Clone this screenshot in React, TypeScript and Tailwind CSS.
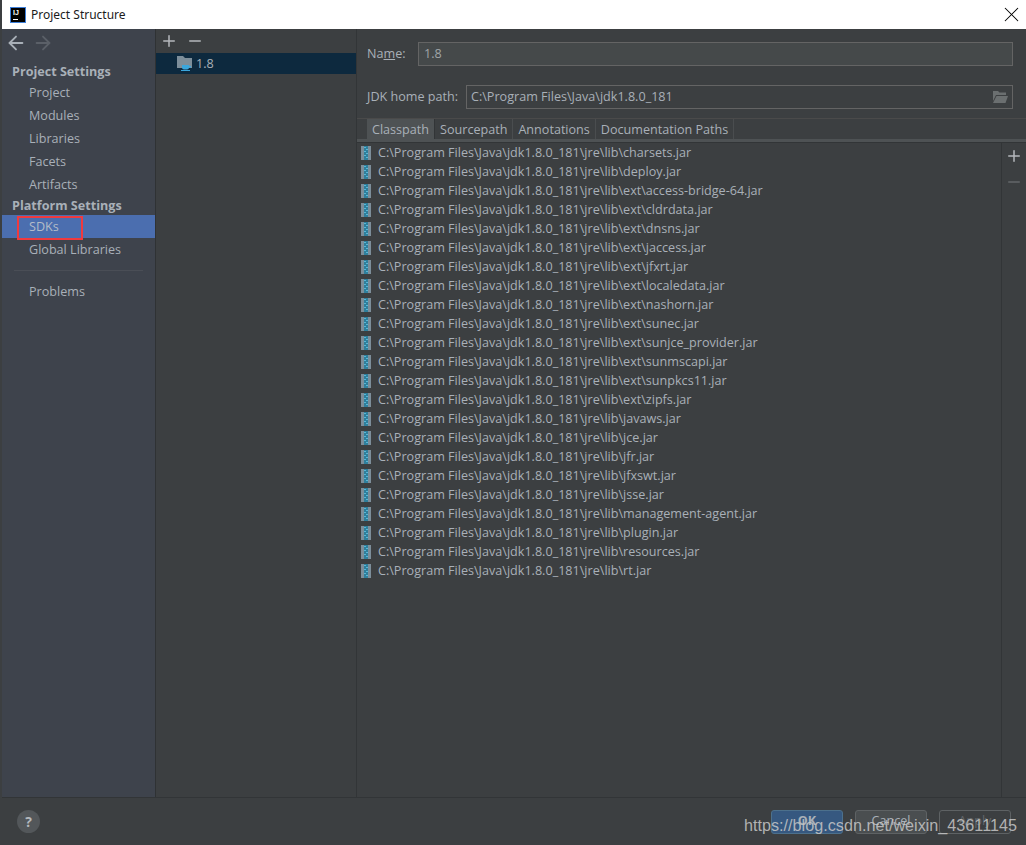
import { ArrowLeft, ArrowRight, Minus, Plus, X } from 'lucide-react';

const jars = [
  'charsets.jar',
  'deploy.jar',
  'ext\\access-bridge-64.jar',
  'ext\\cldrdata.jar',
  'ext\\dnsns.jar',
  'ext\\jaccess.jar',
  'ext\\jfxrt.jar',
  'ext\\localedata.jar',
  'ext\\nashorn.jar',
  'ext\\sunec.jar',
  'ext\\sunjce_provider.jar',
  'ext\\sunmscapi.jar',
  'ext\\sunpkcs11.jar',
  'ext\\zipfs.jar',
  'javaws.jar',
  'jce.jar',
  'jfr.jar',
  'jfxswt.jar',
  'jsse.jar',
  'management-agent.jar',
  'plugin.jar',
  'resources.jar',
  'rt.jar',
];

const tabs = ['Classpath', 'Sourcepath', 'Annotations', 'Documentation Paths'];

function SideItem({ label }: { label: string }) {
  return <div className="h-[23px] pl-[27px] leading-[23px] text-[#a9b0b8]">{label}</div>;
}

function JarIcon() {
  return (
    <svg width="10" height="14" viewBox="0 0 10 14" className="mb-[2px] shrink-0">
      <rect x="0" y="0" width="3" height="14" fill="#7d8e9a" />
      <rect x="7" y="0" width="3" height="14" fill="#7d8e9a" />
      <rect x="3" y="0" width="4" height="14" fill="#2f7f9c" />
      <path d="M3 1h2v1H3zM5 3h2v1H5zM3 5h2v1H3zM5 7h2v1H5zM3 9h2v1H3zM5 11h2v1H5z" fill="#58b8d8" />
    </svg>
  );
}

function SdkIcon() {
  return (
    <svg width="16" height="15" viewBox="0 0 16 15" className="shrink-0">
      <path d="M0 0h6l2 2h7v10H0z" fill="#7d8e9a" />
      <path d="M5 9h7v2.5a2 2 0 0 1-2 2H7a2 2 0 0 1-2-2z" fill="#3aa6dc" />
      <path d="M12 10h2v1.5h-2zM4 14h9v1H4z" fill="#3aa6dc" />
    </svg>
  );
}

function FolderOpenIcon() {
  return (
    <svg width="15" height="12" viewBox="0 0 15 12">
      <path d="M0 0h5l1.500 1.500H13V4H3L0 10z" fill="#6b6f70" />
      <path d="M3.500 5H15l-2.500 7H0z" fill="#6b6f70" />
    </svg>
  );
}

function LogoIcon() {
  return (
    <div className="flex h-4 w-4 flex-col border border-[#3d7fd9] bg-black px-[2px] pt-px font-['Liberation_Sans',sans-serif] text-[7px] leading-[8px] font-bold text-white">
      <span>IJ</span>
      <span className="mt-[2px] h-px w-[5px] bg-white" />
    </div>
  );
}

export default function App() {
  return (
    <div className="relative flex h-[845px] w-[1026px] flex-col overflow-hidden bg-[#3c3f41] pl-[2px] font-['Open_Sans',sans-serif] text-[12.600px] text-[#a9b0b8]">
      <div className="flex h-[29px] shrink-0 items-center bg-white pr-[2px] pl-2 text-[#1b1b1b]">
        <LogoIcon />
        <span className="ml-[5px] font-['Noto_Sans',sans-serif] text-[12px]">Project Structure</span>
        <X className="ml-auto h-[25px] w-[25px] text-black" strokeWidth={1} />
      </div>

      <div className="flex min-h-0 flex-1">
        <div className="flex w-[154px] shrink-0 flex-col border-r border-[#2f3234] bg-[#3e434c]">
          <div className="flex h-[28px] items-center gap-[5px] pl-[3px]">
            <ArrowLeft className="h-[22px] w-[22px] text-[#a9b0b8]" strokeWidth={2} />
            <ArrowRight className="h-[22px] w-[22px] text-[#5b6068]" strokeWidth={2} />
          </div>
          <div className="mt-[5px] h-[19px] pl-[10px] leading-[19px] font-bold text-[#a9b0b8]">Project Settings</div>
          <SideItem label="Project" />
          <SideItem label="Modules" />
          <SideItem label="Libraries" />
          <SideItem label="Facets" />
          <SideItem label="Artifacts" />
          <div className="h-[19px] pl-[10px] leading-[19px] font-bold text-[#a9b0b8]">Platform Settings</div>
          <div className="relative h-[23px] bg-[#4b6eaf] pl-[27px] leading-[23px] text-[#b4bcc8]">
            SDKs
            <div className="absolute top-[1px] left-[15px] h-[24px] w-[66px] border-2 border-[#f03a3e]" />
          </div>
          <SideItem label="Global Libraries" />
          <div className="mx-[12px] mt-[9px] mb-[9px] h-px bg-[#4a4e56]" />
          <SideItem label="Problems" />
        </div>

        <div className="flex w-[201px] shrink-0 flex-col border-r border-[#323537] bg-[#3c3f41]">
          <div className="flex h-[24px] items-center gap-[8px] pl-[4px]">
            <Plus className="h-[18px] w-[18px] text-[#b4b8bc]" strokeWidth={2} />
            <Minus className="h-[18px] w-[18px] text-[#b4b8bc]" strokeWidth={2} />
          </div>
          <div className="flex h-[21px] items-center gap-[3px] bg-[#0d293e] pl-[21px] text-[#a9b0b8]">
            <SdkIcon />
            <span className="pt-[2px]">1.8</span>
          </div>
        </div>

        <div className="flex min-w-0 flex-1 flex-col">
          <div className="mt-[13px] flex h-[24px] items-center pr-[13px] pl-[10px]">
            <span className="w-[51px]">
              Na<span className="underline">m</span>e:
            </span>
            <div className="flex h-[24px] flex-1 items-center border border-[#646464] bg-[#45494a] pl-[5px] text-[#a0a5a8]">1.8</div>
          </div>
          <div className="mt-[19px] flex h-[24px] items-center pr-[13px] pl-[10px]">
            <span className="w-[99px]">JDK home path:</span>
            <div className="flex h-[24px] flex-1 items-center justify-between border border-[#646464] pr-1 pl-[4px]">
              <span>C:\Program Files\Java\jdk1.8.0_181</span>
              <FolderOpenIcon />
            </div>
          </div>
          <div className="mt-[9px] h-px bg-[#4a4a4a]" />

          <div className="flex h-[20px] pl-[10px]">
            {tabs.map((tab, i) => (
              <div
                key={tab}
                className={
                  i === 0
                    ? 'flex items-center border-r border-[#323537] bg-[#4e5254] px-[5px] pt-[2px] text-[#a9b0b8]'
                    : 'flex items-center border-r border-[#4a4d4f] px-[5px] pt-[2px] text-[#a9b0b8]'
                }
              >
                {tab}
              </div>
            ))}
          </div>
          <div className="h-[4px] border-b border-[#323537] bg-[#4e5254]" />

          <div className="flex min-h-0 flex-1">
            <div className="flex-1 pt-px pl-[4px]">
              {jars.map((jar) => (
                <div key={jar} className="flex h-[19px] items-center gap-[7px] whitespace-nowrap">
                  <JarIcon />
                  <span>C:\Program Files\Java\jdk1.8.0_181\jre\lib\{jar}</span>
                </div>
              ))}
            </div>
            <div className="flex w-[25px] shrink-0 flex-col items-center gap-[8px] border-l border-[#323537] pt-[4px]">
              <Plus className="h-[18px] w-[18px] text-[#b4b8bc]" strokeWidth={2} />
              <Minus className="h-[18px] w-[18px] text-[#63676a]" strokeWidth={2} />
            </div>
          </div>
        </div>
      </div>

      <div className="flex h-[48px] shrink-0 items-center justify-between border-t border-[#323537] pr-[15px] pl-[15px]">
        <div className="flex h-[23px] w-[23px] items-center justify-center rounded-full bg-[#53575a] text-[14px] font-bold text-[#b4b8bc]">?</div>
        <div className="flex gap-[12px]">
          <div className="flex h-[24px] w-[72px] items-center justify-center rounded-[3px] border border-[#4c708c] bg-[#365880] font-bold text-[#a9b0b8]">OK</div>
          <div className="flex h-[24px] w-[72px] items-center justify-center rounded-[3px] border border-[#5e6264] bg-[#4a4e50] text-[#a9b0b8]">Cancel</div>
          <div className="flex h-[24px] w-[72px] items-center justify-center rounded-[3px] border border-[#5e6264] text-[#63676a]">Apply</div>
        </div>
      </div>

      <div className="absolute top-[815px] left-[744px] font-['Liberation_Sans',sans-serif] text-[16.200px] leading-[20px] whitespace-nowrap text-[#c8c8c8]/85">
        https://blog.csdn.net/weixin_43611145
      </div>
    </div>
  );
}
